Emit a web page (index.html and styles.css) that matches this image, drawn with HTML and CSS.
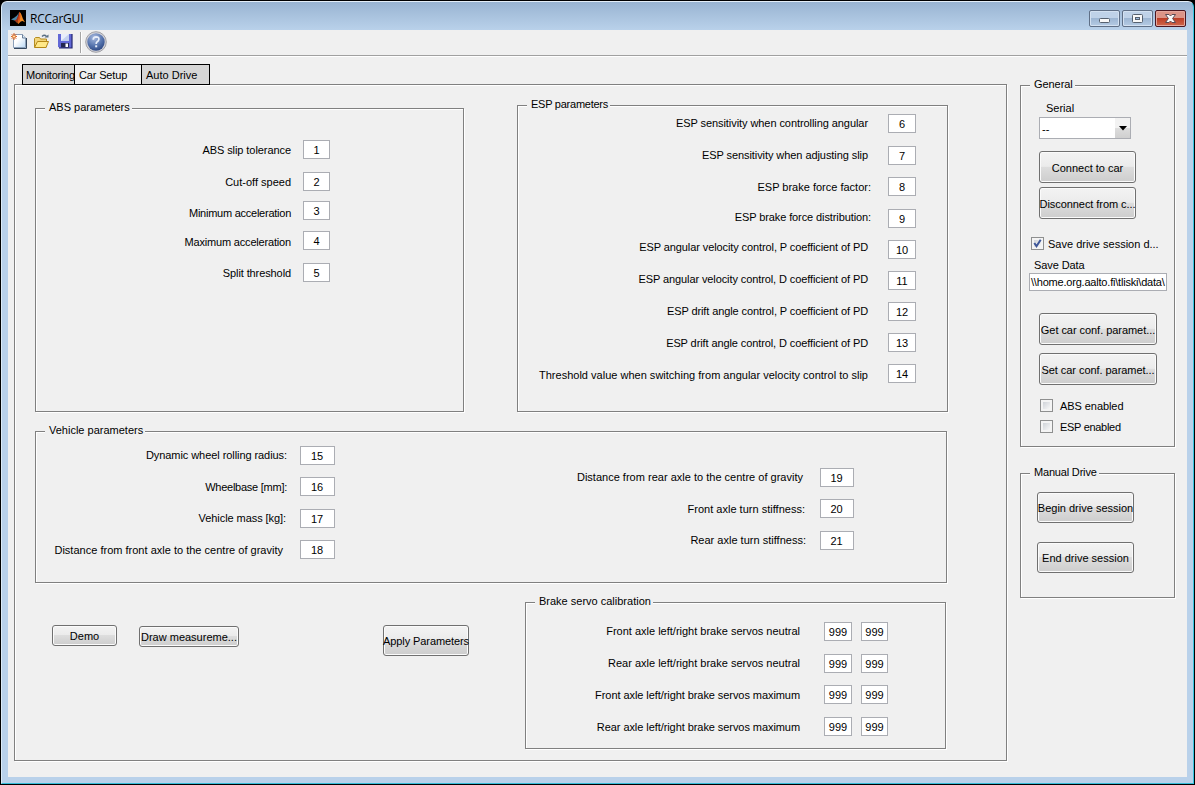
FILE: index.html
```html
<!DOCTYPE html>
<html lang="en">
<head>
<meta charset="utf-8">
<title>RCCarGUI</title>
<link rel="stylesheet" href="styles.css">
</head>
<body>
<div class="desktop">
<div class="window">
  <header class="titlebar">
    <svg class="app-icon" viewBox="0 0 16 16">
      <rect width="16" height="16" fill="#000"/>
      <path d="M1 9.500 4.500 7.500 7 5.500 9 2.500 7.600 8 5.800 11.400 4.500 10.600Z" fill="#4a86a8"/>
      <path d="M4.200 10.600 6.500 9.500 8.400 5 9.600 1.800 10.600 3.500 8 11 6.800 13 5.600 11.300Z" fill="#a5351a"/>
      <path d="M9.700 1.800 11.400 4.500 13 9 15 12.200 12.500 11 10.800 11.400 8.200 14 7.300 12.600 9 8Z" fill="#f08a24"/>
      <path d="M9.700 2 10.500 6 9.600 11 8.200 13.500 8.400 9Z" fill="#d64c1c"/>
    </svg>
    <span class="title">RCCarGUI</span>
    <div class="controls">
      <svg class="control" viewBox="1 1 29 15"><rect x="10.500" y="8.500" width="10" height="4" rx="1" fill="#f8f8f8" stroke="#56616f"/></svg>
      <svg class="control" viewBox="1 1 29 15"><rect x="10.500" y="4.500" width="10" height="8" rx="1" fill="#f8f8f8" stroke="#56616f"/><rect x="13.500" y="7.500" width="4" height="2" fill="#9ebbe0" stroke="#56616f"/></svg>
      <svg class="control close" viewBox="1 1 29 15"><path d="M10.500 4.500H14L15.500 6 17 4.500H20.500L17.600 8.500 20.500 12.500H17L15.500 11 14 12.500H10.500L13.400 8.500Z" fill="#fafafa" stroke="#5a4a54"/></svg>
    </div>
  </header>
  <main class="client">
    <nav class="toolbar">
      <svg class="tool new" viewBox="0 0 17 17">
        <defs><linearGradient id="page" x1="0" y1="0" x2="1" y2="1"><stop offset=".4" stop-color="#fff"/><stop offset="1" stop-color="#b9d8f4"/></linearGradient></defs>
        <path d="M2.500 1.500H11.500L14.500 5V14.500H2.500Z" fill="url(#page)" stroke="#8ba0ba"/><path d="M11.500 1.500V5H14.500" fill="#dcecfa" stroke="#6f8199"/>
        <path d="M15.500 5V15.500H3" fill="none" stroke="#33475e"/>
        <path d="M3 0V7M0 3.500H6M.7 1.200 5.300 5.800M5.300 1.200.7 5.800" stroke="#d9642c" stroke-width="1"/><circle cx="3" cy="3.500" r="1.500" fill="#ffe1ad" stroke="#e07b3b"/>
      </svg>
      <svg class="tool open" viewBox="0 0 17 17">
        <path d="M1.500 14V5.500L2.500 4.500H6.500L7.500 6H13.500V14Z" fill="#f3d57a" stroke="#b48d22"/>
        <path d="M1.500 14.500 4.500 8.500H15.500L13 14.500Z" fill="#ffe888" stroke="#b48717"/>
        <path d="M9 3.500Q11.500 1 13.500 3.500" fill="none" stroke="#596f85" stroke-width="1.300"/><path d="M11.500 4.500H15.500V1.500Z" fill="#596f85"/>
      </svg>
      <svg class="tool save" viewBox="0 0 16 16">
        <path d="M1 1H15V15H2.500L1 13.500Z" fill="#6268d6"/><path d="M15 1V15H2" fill="none" stroke="#24266f" stroke-width="1.200"/>
        <rect x="4" y="1" width="8" height="7" fill="#e9eefb"/><path d="M4 8 12 1V8Z" fill="#c4d1ef"/>
        <rect x="4" y="10" width="8" height="4.500" fill="#23254f"/><rect x="8.500" y="10.500" width="2.500" height="3.500" fill="#fff"/>
      </svg>
      <span class="divider"></span>
      <svg class="help" viewBox="0 0 22 22">
        <defs><radialGradient id="ball" cx=".4" cy=".25" r=".8"><stop offset="0" stop-color="#a9bbdf"/><stop offset=".6" stop-color="#5573ad"/><stop offset="1" stop-color="#2c4680"/></radialGradient></defs>
        <circle cx="11" cy="11" r="10.300" fill="#d2d2d8" stroke="#a0a0a6"/><circle cx="11" cy="11" r="8.700" fill="url(#ball)"/>
        <path d="M8.200 8.700Q8.300 5.800 11.100 5.800 14 5.900 13.900 8.300 13.700 9.900 12 10.900 11.200 11.500 11.200 13" fill="none" stroke="#e8eefa" stroke-width="1.700"/><rect x="10.200" y="14.300" width="2" height="2" fill="#e8eefa"/>
      </svg>
    </nav>
    <div class="workspace">
      <section class="left">
        <div class="tabs"><span class="tab t1">Monitoring</span><span class="tab t2 active">Car Setup</span><span class="tab t3">Auto Drive</span></div>
        <div class="etched page">
          <div class="top-groups">
            <section class="etched abs">
              <h2 class="legend">ABS parameters</h2>
              <div class="form">
                <div class="labels"><span class="snug">ABS slip tolerance</span><span>Cut-off speed</span><span class="tighter">Minimum acceleration</span><span class="tight">Maximum acceleration</span><span class="close-set">Split threshold</span></div>
                <div class="fields"><span>1</span><span>2</span><span>3</span><span>4</span><span>5</span></div>
              </div>
            </section>
            <section class="etched esp">
              <h2 class="legend tighter">ESP parameters</h2>
              <div class="form">
                <div class="labels"><span class="snug">ESP sensitivity when controlling angular</span><span class="snug">ESP sensitivity when adjusting slip</span><span class="colon">ESP brake force factor:</span><span class="colon close-set">ESP brake force distribution:</span><span class="close-set">ESP angular velocity control, P coefficient of PD</span><span class="close-set">ESP angular velocity control, D coefficient of PD</span><span class="close-set">ESP drift angle control, P coefficient of PD</span><span class="close-set">ESP drift angle control, D coefficient of PD</span><span class="loose">Threshold value when switching from angular velocity control to slip</span></div>
                <div class="fields"><span>6</span><span>7</span><span>8</span><span>9</span><span>10</span><span>11</span><span>12</span><span>13</span><span>14</span></div>
              </div>
            </section>
          </div>
          <section class="etched vehicle">
            <h2 class="legend">Vehicle parameters</h2>
            <div class="vehicle-body">
              <div class="form front">
                <div class="labels"><span class="snug">Dynamic wheel rolling radius:</span><span class="tighter">Wheelbase [mm]:</span><span class="in1 snug">Vehicle mass [kg]:</span><span class="in4 loose">Distance from front axle to the centre of gravity</span></div>
                <div class="fields"><span>15</span><span>16</span><span>17</span><span>18</span></div>
              </div>
              <div class="form rear">
                <div class="labels"><span class="in3 loose">Distance from rear axle to the centre of gravity</span><span class="in1 loose">Front axle turn stiffness:</span><span class="loose">Rear axle turn stiffness:</span></div>
                <div class="fields"><span>19</span><span>20</span><span>21</span></div>
              </div>
            </div>
          </section>
          <div class="bottom">
            <button class="btn demo">Demo</button>
            <button class="btn draw">Draw measureme...</button>
            <button class="btn apply">Apply Parameters</button>
            <section class="etched brake">
              <h2 class="legend">Brake servo calibration</h2>
              <div class="form">
                <div class="labels"><span>Front axle left/right brake servos neutral</span><span>Rear axle left/right brake servos neutral</span><span class="snug">Front axle left/right brake servos maximum</span><span class="snug">Rear axle left/right brake servos maximum</span></div>
                <div class="fields"><span>999</span><span>999</span><span>999</span><span>999</span></div>
                <div class="fields second"><span>999</span><span>999</span><span>999</span><span>999</span></div>
              </div>
            </section>
          </div>
        </div>
      </section>
      <aside class="right">
        <section class="etched general">
          <h2 class="legend snug">General</h2>
          <div class="serial-label">Serial</div>
          <div class="select"><span>--</span><i class="arrow"><svg viewBox="0 0 8 5"><path d="M0 0H8L4 4.500Z"/></svg></i></div>
          <button class="btn connect">Connect to car</button>
          <button class="btn disconnect">Disconnect from c...</button>
          <label class="check save-check"><span class="box"><svg viewBox="1 1 11 11"><path d="M3.300 6 5.500 9.200 9.700 2.800" fill="none" stroke="#3d5698" stroke-width="2"/></svg></span>Save drive session d...</label>
          <div class="save-label">Save Data</div>
          <div class="path">\\home.org.aalto.fi\tliski\data\</div>
          <button class="btn get">Get car conf. paramet...</button>
          <button class="btn set">Set car conf. paramet...</button>
          <label class="check abs-check"><span class="box"></span>ABS enabled</label>
          <label class="check esp-check"><span class="box"></span>ESP enabled</label>
        </section>
        <section class="etched manual">
          <h2 class="legend tight">Manual Drive</h2>
          <button class="btn begin">Begin drive session</button>
          <button class="btn end">End drive session</button>
        </section>
      </aside>
    </div>
  </main>
</div>
</div>
</body>
</html>
```
FILE: styles.css
```css
* { box-sizing: border-box; }
body { margin: 0; width: 1195px; height: 785px; overflow: hidden; font: 11px/14px "Liberation Sans", Arial, sans-serif; color: #000; background: #000; }
svg { display: block; }
.desktop { width: 1195px; height: 785px; padding: 1px; background: #000; }
.window { width: 1193px; height: 783px; border: 1px solid; border-color: #e4eef8 #35c5e0 #35bdd8 #dcebf7; border-radius: 6px 6px 0 0; padding: 0 6px 6px; background: linear-gradient(#99b4d2 0, #b9d1ea 28px); }
.titlebar { height: 28px; display: flex; padding: 8px 1px 0 2px; }
.app-icon { width: 16px; height: 16px; }
.title { margin: 1px 0 0 4px; font: 12px/16px "Open Sans", "Noto Sans", sans-serif; letter-spacing: -0.2px; }
.controls { margin-left: auto; display: flex; gap: 2px; }
.control { width: 31px; height: 17px; border: 1px solid #5f6f86; border-radius: 2px; box-shadow: inset 0 0 0 1px #d3e1f1; background: linear-gradient(#bfd2e8 45%, #9db6d3 50%, #b5cbe4); }
.control.close { border-color: #4b1620; box-shadow: inset 0 0 0 1px #e4a79d; background: linear-gradient(#dc9487 45%, #bd3e27 50%, #cf684d); }
.client { width: 1179px; height: 747px; background: #f0f0f0; }
.toolbar { height: 27px; border-bottom: 1px solid #fff; box-shadow: inset 0 -1px #a0a0a0; display: flex; padding: 1px 0 0 3px; }
.tool { width: 17px; height: 17px; margin-top: 2px; }
.open { margin-left: 5px; }
.save { width: 16px; height: 16px; margin-left: 7px; }
.divider { width: 2px; height: 21px; margin: 1px 0 0 7px; border-left: 1px solid #a5a5a5; border-right: 1px solid #fff; }
.help { width: 22px; height: 22px; margin-left: 3px; }
.workspace { display: flex; }
.left { width: 993px; margin: 7px 0 0 6px; }
.tabs { display: flex; height: 21px; padding-left: 8px; margin-bottom: -1px; position: relative; z-index: 1; }
.tab { height: 21px; border: 1px solid #000; border-right: 0; background: #d6d6d6; line-height: 21px; padding-left: 3px; white-space: nowrap; }
.tab.active { background: #f0f0f0; padding-left: 4px; }
.t1 { width: 52px; letter-spacing: -0.25px; }
.t2 { width: 67px; letter-spacing: -0.15px; }
.t3 { width: 69px; border-right: 1px solid #000; padding-left: 4px; }
.etched { border: 1px solid #808080; box-shadow: 1px 1px #fff, inset 1px 1px #fff; }
.page { height: 677px; }
.legend { margin: -9px 0 0 9px; padding: 0 2px 0 4px; width: max-content; height: 15px; font: inherit; background: #f0f0f0; white-space: nowrap; }
.close-set { letter-spacing: -0.1px; }
.snug { letter-spacing: -0.07px; }
.tight { letter-spacing: -0.18px; }
.tighter { letter-spacing: -0.25px; }
.loose { letter-spacing: 0.01px; }
.top-groups { display: flex; padding: 20px 0 0 20px; align-items: flex-end; height: 327px; }
.abs { width: 429px; height: 304px; }
.esp { width: 431px; height: 307px; margin-left: 53px; }
.form { display: flex; }
.labels, .fields { display: grid; align-content: start; }
.labels span { text-align: right; white-space: nowrap; height: 14px; }
.fields span { width: 100%; height: 19px; background: #fff; border: 1px solid #abadb3; text-align: center; line-height: 18px; }
.abs .labels { width: 255px; grid-template-rows: 32px 31px 29px 31px 14px; margin-top: 28px; }
.abs .fields { width: 27px; margin: 25px 0 0 12px; grid-template-rows: 32px 29px 30px 32px 19px; }
.esp .labels { width: 350px; margin-top: 4px; grid-template-rows: 32px 32px 30px 30px 32px 32px 32px 32px 14px; }
.esp .labels .colon { margin-right: -3px; }
.esp .fields { width: 28px; margin: 2px 0 0 20px; grid-template-rows: 32px 31px 32px 31px 31px 31px 31px 31px 19px; }
.vehicle { margin: 19px 0 0 20px; width: 912px; height: 152px; }
.vehicle-body { display: flex; }
.front .labels { width: 251px; margin-top: 10px; grid-template-rows: 32px 31px 32px 14px; }
.front .fields { width: 35px; margin: 8px 0 0 13px; grid-template-rows: 31px 32px 31px 19px; }
.rear .labels { width: 471px; margin-top: 32px; grid-template-rows: 32px 31px 14px; }
.rear .fields { width: 34px; margin: 30px 0 0 14px; grid-template-rows: 31px 32px 19px; }
.front .fields span, .rear .fields span { padding-right: 1px; }
.in1 { margin-right: 1px; }
.in3 { margin-right: 3px; }
.in4 { margin-right: 4px; }
.bottom { display: flex; padding: 19px 0 0 37px; align-items: flex-start; }
.btn { display: flex; align-items: center; justify-content: center; padding: 0; font: inherit; color: #000; white-space: nowrap; border: 1px solid #707070; border-radius: 3px; background: linear-gradient(#f3f3f3, #ebebeb 48%, #dddddd 50%, #cdcdcd); box-shadow: inset 0 0 0 1px #fbfbfb; }
.demo { width: 65px; height: 21px; margin-top: 23px; }
.draw { width: 100px; height: 21px; margin: 24px 0 0 22px; }
.apply { width: 86px; height: 31px; margin: 23px 0 0 144px; letter-spacing: -0.1px; }
.brake { width: 421px; height: 147px; margin-left: 56px; }
.brake .labels { width: 274px; margin-top: 15px; grid-template-rows: 32px 32px 32px 14px; }
.brake .fields { width: 28px; margin: 13px 0 0 24px; grid-template-rows: 32px 31px 32px 19px; }
.brake .fields.second { width: 27px; margin-left: 9px; }
.right { margin: 28px 0 0 13px; width: 155px; }
.general { height: 362px; }
.serial-label { margin: 9px 0 0 25px; }
.select { display: flex; justify-content: space-between; width: 92px; height: 22px; margin: 2px 0 0 18px; padding-left: 2px; border: 1px solid #abadb3; background: #fff; line-height: 23px; }
.arrow { width: 15px; background: linear-gradient(#f2f2f2 48%, #dddddd 50%, #cfcfcf); display: flex; align-items: center; justify-content: center; }
.arrow svg { width: 8px; height: 5px; }
.connect, .disconnect { width: 97px; height: 32px; margin: 12px 0 0 18px; padding-top: 2px; }
.disconnect { margin-top: 4px; letter-spacing: -0.07px; }
.check { display: flex; align-items: center; height: 13px; white-space: nowrap; }
.box { width: 13px; height: 13px; border: 1px solid #8e8f8f; background: linear-gradient(135deg, #c4c9d0, #f6f6f6 80%); box-shadow: inset 0 0 0 2px #f4f4f4; }
.box svg { width: 11px; height: 11px; }
.save-check { margin: 18px 0 0 10px; gap: 4px; }
.save-label { margin: 8px 0 0 13px; letter-spacing: -0.1px; }
.path { width: 138px; height: 18px; margin: 1px 0 0 8px; border: 1px solid #abadb3; background: #fff; padding-left: 1px; line-height: 17px; letter-spacing: -0.2px; white-space: nowrap; }
.get, .set { width: 118px; height: 32px; margin: 22px 0 0 18px; padding-top: 2px; letter-spacing: -0.05px; }
.set { margin-top: 8px; }
.abs-check, .esp-check { margin: 14px 0 0 19px; gap: 7px; letter-spacing: -0.07px; }
.esp-check { margin-top: 8px; letter-spacing: -0.3px; }
.manual { height: 125px; margin-top: 26px; }
.begin, .end { width: 97px; height: 31px; margin: 12px 0 0 16px; }
.end { margin-top: 19px; }
```
